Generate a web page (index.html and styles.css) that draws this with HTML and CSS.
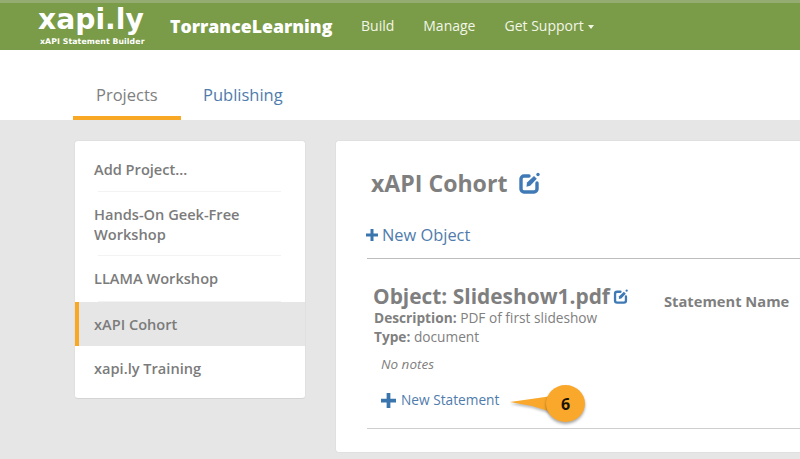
FILE: index.html
```html
<!DOCTYPE html>
<html lang="en">
<head>
<meta charset="utf-8">
<title>xapi.ly</title>
<link rel="stylesheet" href="styles.css">
</head>
<body>
<header class="topbar">
  <div class="brand">
    <div class="brand-name">xapi.ly</div>
    <div class="brand-sub">xAPI Statement Builder</div>
  </div>
  <div class="org">TorranceLearning</div>
  <nav class="nav">
    <a>Build</a>
    <a>Manage</a>
    <a>Get Support <span class="caret"></span></a>
  </nav>
</header>
<div class="tabs">
  <a class="tab active">Projects</a>
  <a class="tab">Publishing</a>
</div>
<main class="content">
  <aside class="sidebar">
    <div class="side-item"><span class="side-text">Add Project...</span></div>
    <div class="side-item"><span class="side-text">Hands-On Geek-Free Workshop</span></div>
    <div class="side-item"><span class="side-text">LLAMA Workshop</span></div>
    <div class="side-item selected"><span class="side-text">xAPI Cohort</span></div>
    <div class="side-item"><span class="side-text">xapi.ly Training</span></div>
  </aside>
  <section class="card">
    <h1 class="title">xAPI Cohort
      <svg class="edit edit-lg" viewBox="0 0 22 22"><use href="#edit-icon"/></svg>
    </h1>
    <a class="new-object"><svg class="plus plus-sm" viewBox="0 0 12 12"><path d="M4.5 0h3v4.5H12v3H7.5V12h-3V7.5H0v-3h4.5z"/></svg>New Object</a>
    <div class="object">
      <div class="object-info">
        <h2 class="object-title"><span>Object: Slideshow1.pdf</span><svg class="edit edit-sm" viewBox="0 0 22 22"><use href="#edit-icon"/></svg></h2>
        <div class="meta meta-first"><b>Description:</b> PDF of first slideshow</div>
        <div class="meta"><b>Type:</b> document</div>
        <div class="notes">No notes</div>
        <a class="new-statement"><svg class="plus plus-md" viewBox="0 0 12 12"><path d="M4.5 0h3v4.5H12v3H7.5V12h-3V7.5H0v-3h4.5z"/></svg>New Statement</a>
      </div>
      <div class="statement-head">Statement Name</div>
    </div>
  </section>
</main>
<div class="callout">
  <svg class="callout-tail" viewBox="0 0 60 33"><path d="M0 18 L42 12 L48 30 L22 22 Q10 20 0 18 Z"/></svg>
  <span class="callout-badge">6</span>
</div>
<svg class="defs" width="0" height="0">
  <symbol id="edit-icon" viewBox="0 0 22 22">
    <path d="M11 4H6a3 3 0 0 0-3 3v10a3 3 0 0 0 3 3h10a3 3 0 0 0 3-3v-6" fill="none" stroke="currentColor" stroke-width="3.4" stroke-linecap="round"/>
    <path d="M9 10.5 16 4l2.8 2.8-6.6 7-3.7.9z" fill="currentColor"/>
    <circle cx="20" cy="2.5" r="1.7" fill="currentColor"/>
  </symbol>
</svg>
</body>
</html>
```
FILE: styles.css
```css
* { box-sizing: border-box; }
html, body { margin: 0; height: 459px; overflow: hidden; }
body {
  position: relative;
  width: 800px;
  background: #e6e6e6;
  font-family: "Open Sans", sans-serif;
  color: #7b7b7b;
}
a { color: inherit; text-decoration: none; }
.defs { position: absolute; }

.topbar {
  height: 50px;
  background: #7a9b47;
  border-top: 3px solid #94ab71;
  display: flex;
  align-items: flex-start;
  color: #fff;
  padding-left: 38px;
}
.brand { width: 132px; }
.brand-name {
  font: bold 28.2px/30px "DejaVu Sans", sans-serif;
  margin-top: 2px;
  height: 30px;
}
.brand-sub {
  font: bold 7.75px/10px "DejaVu Sans", sans-serif;
  margin: 2px 0 0 2px;
  letter-spacing: 0.1px;
  white-space: nowrap;
}
.org {
  font: 800 17.7px/24px "Open Sans", sans-serif;
  margin-top: 11px;
  width: 191px;
  white-space: nowrap;
}
.nav { display: flex; gap: 29px; font-size: 14px; line-height: 20px; margin-top: 13px; color: #f2f6e8; }
.caret {
  display: inline-block;
  width: 0; height: 0;
  border-left: 3.5px solid transparent;
  border-right: 3.5px solid transparent;
  border-top: 4px solid #f2f6e8;
  vertical-align: middle;
  margin-left: 1px;
}

.tabs {
  height: 70px;
  background: #fff;
  padding-left: 73px;
  display: flex;
  align-items: flex-end;
}
.tab {
  font-size: 16.5px;
  line-height: 22px;
  color: #4f7cac;
  padding: 0 22px 10px;
  height: 36px;
  border-bottom: 4px solid transparent;
}
.tab.active { color: #808080; border-bottom-color: #f9a825; width: 108px; padding-left: 23px; }

.content {
  display: flex;
  align-items: flex-start;
  padding: 20px 0 0 74px;
  gap: 29px;
}
.sidebar {
  width: 232px;
  height: 259px;
  background: #fff;
  border: 1px solid #e0e0e0;
  border-bottom-color: #d4d4d4;
  border-radius: 4px;
  padding: 7px 0 0;
  flex: none;
  overflow: hidden;
}
.side-item {
  padding: 0 19px;
  font-size: 14.6px;
  font-weight: 600;
  line-height: 20px;
  color: #7b7b7b;
  display: flex;
  align-items: center;
  min-height: 44.8px;
  position: relative;
}
.side-item:first-child { min-height: 44px; padding-bottom: 2px; }
.side-item:nth-child(2) { min-height: 64px; }
.side-item:nth-child(3) { min-height: 46px; padding-bottom: 2px; }
.side-item:not(.selected):not(:last-child)::after {
  content: "";
  position: absolute;
  left: 23px; right: 24px; bottom: 0;
  height: 1px;
  background: #f3f3f3;
}
.side-item.selected {
  background: #e6e6e6;
  border-left: 5px solid #f9a825;
  margin-left: -1px;
  padding: 0 15px 1px;
  min-height: 44px;
}

.card {
  flex: none;
  width: 481px;
  height: 313px;
  background: #fff;
  border: 1px solid #e0e0e0;
  border-right: 0;
  border-radius: 4px 0 0 4px;
  padding: 0 0 0 31px;
  position: relative;
}
.title {
  margin: 27px 0 0 4px;
  font-size: 23.1px;
  line-height: 30px;
  font-weight: 700;
  color: #7f7f7f;
  display: flex;
  align-items: center;
}
.edit { color: #3f7ab6; flex: none; }
.edit-lg { width: 22px; height: 22px; margin-left: 11px; }
.edit-sm { width: 15px; height: 15px; margin-left: 3px; }
.new-object {
  display: flex;
  align-items: center;
  margin: 25px 0 0 -1px;
  font-size: 16.4px;
  line-height: 24px;
  color: #4f7cac;
}
.plus { fill: #3b75ad; flex: none; }
.plus-sm { width: 12px; height: 12px; margin-right: 4px; }
.plus-md { width: 15px; height: 15px; margin-right: 5px; }
.object {
  margin-top: 11px;
  height: 171px;
  border-top: 1px solid #bdbdbd;
  border-bottom: 1px solid #cfcfcf;
  display: flex;
  position: relative;
}
.object-info { width: 297px; padding: 26px 0 0 7px; flex: none; }
.object-title {
  margin: 0 0 0 -1px;
  font-size: 20.9px;
  line-height: 22px;
  font-weight: 700;
  color: #7f7f7f;
  display: flex;
  align-items: center;
  white-space: nowrap;
}
.meta { font-size: 13.7px; line-height: 20px; color: #808080; }
.meta-first { margin-top: 1px; line-height: 19px; }
.meta b { font-weight: 700; }
.notes { font-size: 13.5px; font-style: italic; line-height: 20px; margin: 7px 0 0 7px; color: #808080; }
.new-statement {
  display: flex;
  align-items: center;
  margin: 16px 0 0 7px;
  font-size: 13.7px;
  line-height: 20px;
  color: #4f7cac;
}
.statement-head { font-size: 14.7px; font-weight: 700; line-height: 20px; margin-top: 32px; white-space: nowrap; color: #7f7f7f; }

.callout { position: absolute; left: 510px; top: 384px; width: 78px; height: 40px; }
.callout-tail { position: absolute; left: 0; top: 0; width: 60px; height: 33px; fill: #f9a82b; filter: drop-shadow(0 2px 1px rgba(0,0,0,.25)); }
.callout-badge {
  position: absolute;
  left: 36px; top: 1px;
  width: 39px; height: 37px;
  border-radius: 50%;
  background: #f9a82b;
  box-shadow: 0 2px 3px rgba(0,0,0,.35);
  color: #1a1200;
  font-size: 16px;
  font-weight: 700;
  display: flex;
  align-items: center;
  justify-content: center;
}
```
